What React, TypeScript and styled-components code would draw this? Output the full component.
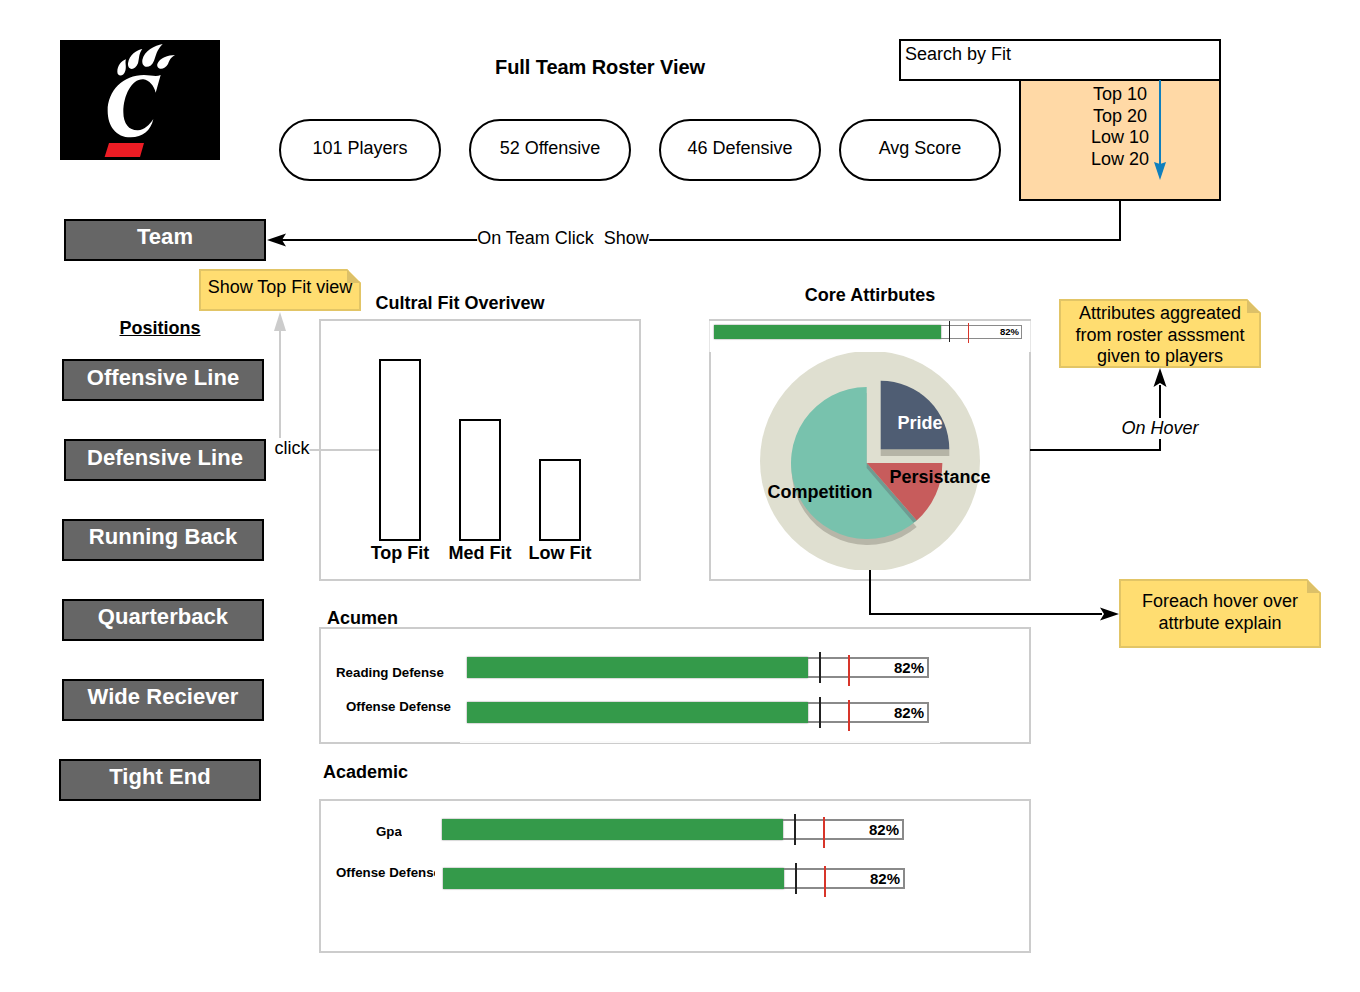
import React, {FC} from 'react';
import styled, {createGlobalStyle, css} from 'styled-components';

const GlobalStyle = createGlobalStyle`
  html, body {
    margin: 0;
    padding: 0;
    background: #fff;
    font-family: "Liberation Sans", Arial, sans-serif;
    color: #000;
  }
`

interface PlaceProps {
  $x: number
  $y: number
  $w?: number
  $h?: number
}

const placed = css<PlaceProps>`
  position: absolute;
  left: ${({$x}) => $x}px;
  top: ${({$y}) => $y}px;
  ${({$w}) => $w !== undefined && `width: ${$w}px;`}
  ${({$h}) => $h !== undefined && `height: ${$h}px;`}
  box-sizing: border-box;
`

const Canvas = styled.div`
  position: relative;
  width: 1360px;
  height: 992px;
  overflow: hidden;
  background: #fff;
`
const Wires = styled.svg`
  position: absolute;
  left: 0;
  top: 0;
`
const LogoMark = styled.svg`
  ${placed}
  display: block;
`
const Title = styled.h1`
  ${placed}
  margin: 0;
  font-size: 20px;
  line-height: 24px;
  font-weight: 700;
  letter-spacing: -0.08px;
  text-align: center;
  white-space: nowrap;
`
const Pill = styled.div`
  ${placed}
  display: flex;
  align-items: center;
  justify-content: center;
  padding-bottom: 4px;
  border: 2px solid #000;
  border-radius: 31px;
  font-size: 18px;
  background: #fff;
`
const SearchBox = styled.div`
  ${placed}
  padding: 2px 0 0 4px;
  border: 2px solid #000;
  font-size: 18px;
  line-height: 22px;
  background: #fff;
`
const Dropdown = styled.div`
  ${placed}
  display: flex;
  flex-direction: column;
  align-items: center;
  padding-top: 3px;
  border: 2px solid #000;
  background: #ffd9a6;
  font-size: 18px;
  line-height: 21.6px;
`
const NavButton = styled.div<PlaceProps & {$lift: number}>`
  ${placed}
  display: flex;
  align-items: center;
  justify-content: center;
  padding-bottom: ${({$lift}) => $lift}px;
  border: 2px solid #000;
  background: #666;
  color: #fff;
  font-size: 22px;
  font-weight: 700;
  letter-spacing: 0.06px;
`
const WireLabel = styled.span<PlaceProps & {$italic?: boolean}>`
  ${placed}
  transform: translateX(-50%);
  padding: 0;
  background: #fff;
  font-size: 18px;
  line-height: 21px;
  white-space: pre;
  font-style: ${({$italic}) => ($italic ? 'italic' : 'normal')};
`
const StickyNote = styled.div<PlaceProps & {$pad: number}>`
  ${placed}
  display: flex;
  flex-direction: column;
  align-items: center;
  padding-top: ${({$pad}) => $pad}px;
  border: 2px solid #e2c566;
  background: #ffdd71;
  font-size: 18px;
  line-height: 21.6px;
  text-align: center;
  white-space: nowrap;
  clip-path: polygon(0 0, calc(100% - 14px) 0, 100% 14px, 100% 100%, 0 100%);
  &::after {
    content: '';
    position: absolute;
    top: -2px;
    right: -2px;
    width: 14px;
    height: 14px;
    background: #dcc068;
    clip-path: polygon(0 0, 100% 100%, 0 100%);
  }
`
const Heading = styled.div<PlaceProps & {$underline?: boolean}>`
  ${placed}
  font-size: 18px;
  line-height: 22px;
  font-weight: 700;
  white-space: nowrap;
  text-align: center;
  text-decoration: ${({$underline}) => ($underline ? 'underline' : 'none')};
`
const Panel = styled.div`
  ${placed}
  border: 2px solid #ccc;
  background: #fff;
`
const FitBars = styled.div`
  ${placed}
  display: flex;
  align-items: flex-end;
  gap: 38px;
`
const FitColumn = styled.div`
  display: flex;
  flex-direction: column;
  align-items: center;
  width: 42px;
`
const FitBar = styled.div<{$height: number}>`
  box-sizing: border-box;
  width: 42px;
  height: ${({$height}) => $height}px;
  border: 2px solid #000;
  background: #fff;
`
const FitLabel = styled.div`
  height: 24px;
  margin-top: 1px;
  font-size: 18px;
  line-height: 22px;
  font-weight: 700;
  white-space: nowrap;
`
const MeterStrip = styled.div`
  ${placed}
  border-left: 1px solid #e6e6e6;
  border-right: 1px solid #e6e6e6;
  background: #fff;
`
const PiePatch = styled.svg`
  ${placed}
  display: block;
`
const PieLabel = styled.span<PlaceProps & {$light?: boolean}>`
  ${placed}
  transform: translateX(-50%);
  font-size: 18px;
  line-height: 22px;
  font-weight: 700;
  white-space: nowrap;
  color: ${({$light}) => ($light ? '#fff' : '#000')};
`
const MeterTrack = styled.div<PlaceProps & {$small?: boolean}>`
  ${placed}
  display: flex;
  align-items: center;
  justify-content: flex-end;
  padding-right: ${({$small}) => ($small ? 2 : 3)}px;
  padding-bottom: ${({$small}) => ($small ? 1 : 0)}px;
  border: ${({$small}) => ($small ? 1 : 2)}px solid #8a8a8a;
  background: #fff;
  font-size: ${({$small}) => ($small ? 9.5 : 15)}px;
  font-weight: 700;
`
const MeterFill = styled.div<{$width: number; $small?: boolean}>`
  position: absolute;
  left: ${({$small}) => ($small ? -1 : -2)}px;
  top: ${({$small}) => ($small ? -1 : -2)}px;
  bottom: ${({$small}) => ($small ? -1 : -2)}px;
  width: ${({$width}) => $width}px;
  background: #349a4a;
  box-shadow: 0 0 1.5px #777;
`
const MeterTick = styled.i<{$left: number; $top: number; $height: number; $color: string; $small?: boolean}>`
  position: absolute;
  left: ${({$left}) => $left}px;
  top: ${({$top}) => $top}px;
  width: ${({$small}) => ($small ? 1 : 2)}px;
  height: ${({$height}) => $height}px;
  background: ${({$color}) => $color};
`
const RowLabel = styled.span<PlaceProps>`
  ${placed}
  overflow: hidden;
  font-size: 13.3px;
  line-height: 16px;
  font-weight: 700;
  white-space: nowrap;
`
const WhiteOut = styled.div`
  ${placed}
  background: #fbfbfb;
`

interface MeterProps {
  x: number
  y: number
  width: number
  height: number
  fill: number
  small?: boolean
}

const Meter: FC<MeterProps> = ({x, y, width, height, fill, small}) => (
  <MeterTrack $x={x} $y={y} $w={width} $h={height} $small={small}>
    <MeterFill $width={fill} $small={small} />
    <MeterTick $small={small} $left={small ? 234 : 350} $top={small ? -5 : -7} $height={small ? 21 : 31} $color="#222" />
    <MeterTick $small={small} $left={small ? 253 : 379} $top={small ? -3 : -4} $height={small ? 20 : 31} $color="#d8352a" />
    <span>82%</span>
  </MeterTrack>
)

const Logo: FC = () => (
  <LogoMark $x={60} $y={40} $w={160} $h={120} viewBox="60 60 480 360">
    <rect x="60" y="60" width="480" height="360" fill="#000" />
    <path
      fill="#fff"
      d="M362 165 L347 218 C342 198 328 180 310 178 C276 176 250 226 250 276 C250 312 268 332 294 331 C312 330 328 315 340 297 C332 332 308 352 272 352 C228 352 203 318 203 272 C203 212 250 165 312 165 C332 165 348 171 362 165 Z"
    />
    <path fill="#fff" d="M258 118 C244 122 232 138 232 155 C232 170 250 172 256 152 C260 138 254 128 258 118 Z" />
    <path fill="#fff" d="M307 87 C290 90 268 104 264 130 C262 150 284 155 294 130 C298 116 296 100 307 87 Z" />
    <path fill="#fff" d="M368 72 C345 76 312 92 307 120 C304 146 332 148 342 122 C348 106 350 90 368 72 Z" />
    <path fill="#fff" d="M405 105 C385 105 358 114 352 132 C348 150 374 152 384 132 C388 122 392 112 405 105 Z" />
    <polygon fill="#ed1c24" points="207,369 312,369 300,411 194,411" />
  </LogoMark>
)

const Wiring: FC = () => (
  <Wires width={1360} height={992}>
    <g fill="none" stroke="#000" strokeWidth={2}>
      <path d="M1120 200 V240 H282" />
      <path d="M1030 450 H1160 V385" />
      <path d="M870 570 V614 H1102" />
    </g>
    <polygon fill="#000" points="267,240 286,233.5 282,240 286,246.5" />
    <polygon fill="#000" points="1160,368 1153.5,387 1160,383 1166.5,387" />
    <polygon fill="#000" points="1119,614 1100,607.5 1104,614 1100,620.5" />
    <g fill="none" stroke="#ccc" strokeWidth={2}>
      <path d="M380 450 H280 V328" />
    </g>
    <polygon fill="#ccc" points="280,312 274,331 286,331" />
  </Wires>
)

const DropdownArrow: FC = () => (
  <Wires width={1360} height={992}>
    <path d="M1160 80 V165" stroke="#0f7fbd" strokeWidth={2} fill="none" />
    <polygon fill="#0f7fbd" points="1160,180 1154,162 1160,164 1166,162" />
  </Wires>
)

const PieChart: FC = () => (
  <PiePatch $x={711} $y={352} $w={318} $h={218} viewBox="711 352 318 218">
    <rect x="711" y="352" width="318" height="218" fill="#fff" />
    <circle cx="870" cy="461" r="110" fill="#dfdfd0" />
    <path d="M866.7 470 V393 A76 76 0 1 0 916.7 527 Z" fill="#b7b6a8" />
    <path d="M866.7 463 V387 A76 76 0 1 0 916.7 520.5 Z" fill="#78c2ad" />
    <path d="M866.7 463 L916.7 520.5 L913.5 522.5 L866.7 468 Z" fill="#6e9c92" />
    <path d="M866.7 463 H942.3 A76 76 0 0 1 916.7 520.5 Z" fill="#c75c5c" />
    <rect x="880.7" y="449" width="68.6" height="7" fill="#b5b4a6" />
    <path d="M880.7 449.3 V380.7 A68.6 68.6 0 0 1 949.3 449.3 Z" fill="#4f5d73" />
  </PiePatch>
)

const positions = [
  {name: 'Offensive Line', x: 62, y: 359, lift: 5},
  {name: 'Defensive Line', x: 64, y: 439, lift: 5},
  {name: 'Running Back', x: 62, y: 519, lift: 7},
  {name: 'Quarterback', x: 62, y: 599, lift: 7},
  {name: 'Wide Reciever', x: 62, y: 679, lift: 7},
  {name: 'Tight End', x: 59, y: 759, lift: 7},
]

const pills = [
  {label: '101 Players', x: 279},
  {label: '52 Offensive', x: 469},
  {label: '46 Defensive', x: 659},
  {label: 'Avg Score', x: 839},
]

const fits = [
  {label: 'Top Fit', height: 182},
  {label: 'Med Fit', height: 122},
  {label: 'Low Fit', height: 82},
]

export default function App() {
  return (
    <Canvas>
      <GlobalStyle />
      <Logo />
      <Title $x={450} $y={55} $w={300}>Full Team Roster View</Title>
      {pills.map(p => (
        <Pill key={p.label} $x={p.x} $y={119} $w={162} $h={62}>{p.label}</Pill>
      ))}

      <Panel $x={319} $y={319} $w={322} $h={262} />
      <Panel $x={709} $y={319} $w={322} $h={262} />
      <MeterStrip $x={709} $y={321} $w={322} $h={31} />
      <Meter x={714} y={325} width={308} height={14} fill={227} small />
      <PieChart />
      <Wiring />

      <Dropdown $x={1019} $y={79} $w={202} $h={122}>
        <span>Top 10</span>
        <span>Top 20</span>
        <span>Low 10</span>
        <span>Low 20</span>
      </Dropdown>
      <SearchBox $x={899} $y={39} $w={322} $h={42}>Search by Fit</SearchBox>
      <DropdownArrow />

      <NavButton $x={64} $y={219} $w={202} $h={42} $lift={7}>Team</NavButton>
      <WireLabel $x={563} $y={228}>On Team Click  Show</WireLabel>
      <StickyNote $x={199} $y={269} $w={162} $h={42} $pad={6}>
        <span>Show Top Fit view</span>
      </StickyNote>
      <Heading $x={60} $y={317} $w={200} $underline>Positions</Heading>
      {positions.map(p => (
        <NavButton key={p.name} $x={p.x} $y={p.y} $w={202} $h={42} $lift={p.lift}>{p.name}</NavButton>
      ))}
      <WireLabel $x={292} $y={438}>click</WireLabel>

      <Heading $x={360} $y={292} $w={200}>Cultral Fit Overivew</Heading>
      <FitBars $x={379} $y={359} $h={207}>
        {fits.map(f => (
          <FitColumn key={f.label}>
            <FitBar $height={f.height} />
            <FitLabel>{f.label}</FitLabel>
          </FitColumn>
        ))}
      </FitBars>

      <Heading $x={770} $y={284} $w={200}>Core Attirbutes</Heading>
      <PieLabel $x={920} $y={412} $light>Pride</PieLabel>
      <PieLabel $x={940} $y={466}>Persistance</PieLabel>
      <PieLabel $x={820} $y={481}>Competition</PieLabel>

      <StickyNote $x={1059} $y={299} $w={202} $h={69} $pad={2}>
        <span>Attributes aggreated</span>
        <span>from roster asssment</span>
        <span>given to players</span>
      </StickyNote>
      <WireLabel $x={1160} $y={418} $italic>On Hover</WireLabel>
      <StickyNote $x={1119} $y={579} $w={202} $h={69} $pad={10}>
        <span>Foreach hover over</span>
        <span>attrbute explain</span>
      </StickyNote>

      <Heading $x={327} $y={607}>Acumen</Heading>
      <Panel $x={319} $y={627} $w={712} $h={117} />
      <WhiteOut $x={460} $y={741} $w={480} $h={2} />
      <RowLabel $x={336} $y={665}>Reading Defense</RowLabel>
      <RowLabel $x={346} $y={699}>Offense Defense</RowLabel>
      <Meter x={467} y={657} width={462} height={21} fill={341} />
      <Meter x={467} y={702} width={462} height={21} fill={341} />

      <Heading $x={323} $y={761}>Academic</Heading>
      <Panel $x={319} $y={799} $w={712} $h={154} />
      <RowLabel $x={376} $y={824}>Gpa</RowLabel>
      <RowLabel $x={336} $y={865} $w={99}>Offense Defense</RowLabel>
      <Meter x={442} y={819} width={462} height={21} fill={341} />
      <Meter x={443} y={868} width={462} height={21} fill={341} />
    </Canvas>
  );
}
